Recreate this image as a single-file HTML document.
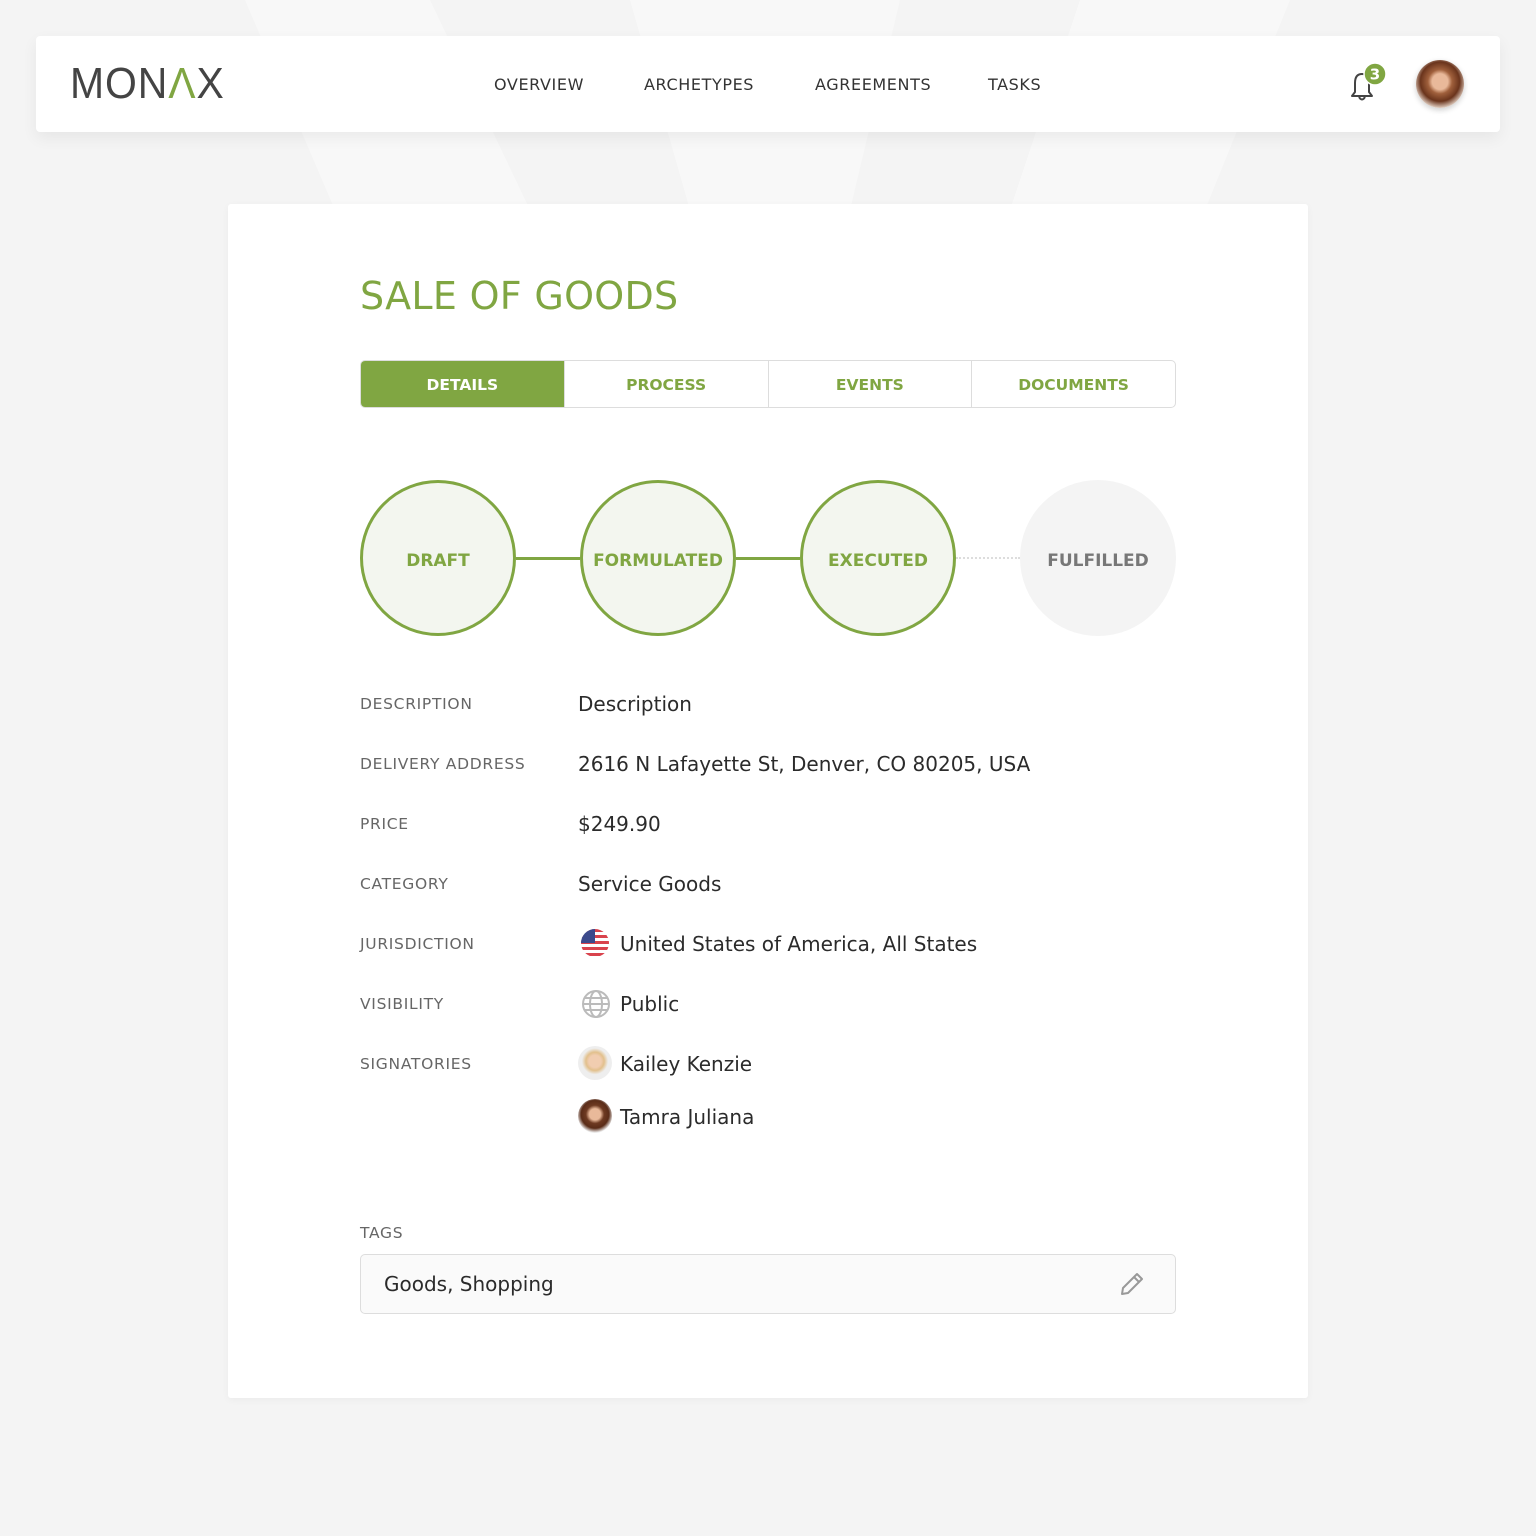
<!DOCTYPE html>
<html><head><style>
*{margin:0;padding:0;box-sizing:border-box}
body{width:1536px;height:1536px;background:#f4f4f4;font-family:"DejaVu Sans","Liberation Sans",sans-serif;position:relative;overflow:hidden;color:#2b2b2b}
.bg{position:absolute;left:0;top:0}
.nav{position:absolute;left:36px;top:36px;width:1464px;height:96px;background:#fff;border-radius:4px;box-shadow:0 6px 16px rgba(0,0,0,.06)}
.logo{position:absolute;left:34px;top:26px;font-family:"Liberation Sans",sans-serif;font-size:44px;letter-spacing:1px;color:#444;font-weight:normal;line-height:44px;transform:scaleX(.93);transform-origin:left}
.menu{position:absolute;top:39px;font-size:16px;color:#333;letter-spacing:.6px}
.card{position:absolute;left:228px;top:204px;width:1080px;height:1194px;background:#fff;border-radius:3px;box-shadow:0 2px 8px rgba(0,0,0,.04)}
h1{position:absolute;left:132px;top:70px;font-size:38px;font-weight:normal;color:#80a642;letter-spacing:.3px}
.tabs{position:absolute;left:132px;top:156px;width:816px;height:48px;border:1.5px solid #ddd;border-radius:5px;display:flex;overflow:hidden}
.tabs div{flex:1;display:flex;align-items:center;justify-content:center;font-size:15.5px;font-weight:bold;color:#80a642;border-left:1.5px solid #ddd;padding-top:2px}
.tabs div:first-child{background:#80a642;color:#fff;border:none}
.c{position:absolute;top:276px;width:156px;height:156px;border-radius:50%;border:3px solid #80a642;background:#f3f6ef;display:flex;align-items:center;justify-content:center;font-size:17px;font-weight:bold;color:#80a642;padding-top:5px}
.line{position:absolute;top:353px;height:3px;background:#80a642}
.lbl{position:absolute;left:132px;font-size:15.5px;color:#666;letter-spacing:.7px}
.val{position:absolute;left:350px;font-size:20px;color:#2b2b2b}
.ic{position:absolute;left:350px;width:34px;height:34px;border-radius:50%}
</style></head><body>
<svg class="bg" width="1536" height="1536"><g fill="#f8f8f8">
<polygon points="245,0 430,0 530,210 335,210"/><polygon points="630,0 900,0 850,210 690,210"/><polygon points="1080,0 1290,0 1205,210 1010,210"/></g></svg>
<div class="nav">
<div class="logo">MON<span style="color:#80a642">Λ</span>X</div>
<div class="menu" style="left:458px">OVERVIEW</div>
<div class="menu" style="left:608px">ARCHETYPES</div>
<div class="menu" style="left:779px">AGREEMENTS</div>
<div class="menu" style="left:952px">TASKS</div>
<svg style="position:absolute;left:1310px;top:26px" width="44" height="44" viewBox="0 0 44 44"><path d="M6 34 L9 30 L9 21 Q9 12 16 12 Q23 12 23 21 L23 30 L26 34 Z" fill="none" stroke="#444" stroke-width="2" stroke-linejoin="round"/><path d="M13 35 Q16 40 19 35" fill="none" stroke="#444" stroke-width="2"/><circle cx="29" cy="12" r="11" fill="#80a642" stroke="#fff" stroke-width="1.5"/><text x="29" y="17.5" font-size="15" fill="#fff" text-anchor="middle" font-family="DejaVu Sans" font-weight="bold">3</text></svg>
<div style="position:absolute;left:1380px;top:24px;width:48px;height:48px;border-radius:50%;background:radial-gradient(circle at 50% 45%,#e9b99a 0 22%,#a0603c 34%,#6a341c 55%,#e8d8cc 75%);box-shadow:0 2px 6px rgba(0,0,0,.2)"></div>
</div>
<div class="card">
<h1>SALE OF GOODS</h1>
<div class="tabs"><div>DETAILS</div><div>PROCESS</div><div>EVENTS</div><div>DOCUMENTS</div></div>
<div class="line" style="left:288px;width:64px"></div>
<div class="line" style="left:508px;width:64px"></div>
<div style="position:absolute;left:728px;top:353px;width:64px;border-top:2px dotted #ddd"></div>
<div class="c" style="left:132px">DRAFT</div>
<div class="c" style="left:352px">FORMULATED</div>
<div class="c" style="left:572px">EXECUTED</div>
<div class="c" style="left:792px;border:none;background:#f4f4f4;color:#777">FULFILLED</div>
<div class="lbl" style="top:491px">DESCRIPTION</div><div class="val" style="top:488px">Description</div>
<div class="lbl" style="top:551px">DELIVERY ADDRESS</div><div class="val" style="top:548px">2616 N Lafayette St, Denver, CO 80205, USA</div>
<div class="lbl" style="top:611px">PRICE</div><div class="val" style="top:608px">$249.90</div>
<div class="lbl" style="top:671px">CATEGORY</div><div class="val" style="top:668px">Service Goods</div>
<div class="lbl" style="top:731px">JURISDICTION</div>
<svg style="position:absolute;left:352px;top:724px" width="30" height="30" viewBox="0 0 30 30"><defs><clipPath id="f"><circle cx="15" cy="15" r="14"/></clipPath></defs><g clip-path="url(#f)"><rect width="30" height="30" fill="#fff"/><g fill="#d9434d"><rect y="1" width="30" height="3"/><rect y="7" width="30" height="3"/><rect y="13" width="30" height="3"/><rect y="19" width="30" height="3"/><rect y="25" width="30" height="3"/></g><rect width="15" height="15" fill="#3c4a8c"/></g></svg>
<div class="val" style="top:728px;left:392px">United States of America, All States</div>
<div class="lbl" style="top:791px">VISIBILITY</div>
<svg style="position:absolute;left:353px;top:785px" width="30" height="30" viewBox="0 0 30 30" fill="none" stroke="#bbb" stroke-width="2"><circle cx="15" cy="15" r="13"/><ellipse cx="15" cy="15" rx="6" ry="13"/><path d="M2 15h26M4 9h22M4 21h22"/></svg>
<div class="val" style="top:788px;left:392px">Public</div>
<div class="lbl" style="top:851px">SIGNATORIES</div>
<div class="ic" style="top:842px;background:radial-gradient(circle at 50% 45%,#f1cdb0 0 24%,#e2c08c 36%,#eee 52%)"></div>
<div class="val" style="top:848px;left:392px">Kailey Kenzie</div>
<div class="ic" style="top:895px;background:radial-gradient(circle at 50% 45%,#e9b99a 0 22%,#6e3a22 36%,#5a2c18 55%,#eee 72%)"></div>
<div class="val" style="top:901px;left:392px">Tamra Juliana</div>
<div class="lbl" style="top:1020px">TAGS</div>
<div style="position:absolute;left:132px;top:1050px;width:816px;height:60px;border:1.5px solid #ddd;border-radius:5px;background:#fafafa">
<div style="position:absolute;left:23px;top:17px;font-size:20px">Goods, Shopping</div>
<svg style="position:absolute;left:756px;top:14px" width="30" height="30" viewBox="0 0 30 30" fill="none" stroke="#999" stroke-width="2" stroke-linejoin="round"><path d="M5 25 L6 19 L20 5 L25 10 L11 24 Z M17 8 L22 13"/></svg>
</div>
</div>
</body></html>
